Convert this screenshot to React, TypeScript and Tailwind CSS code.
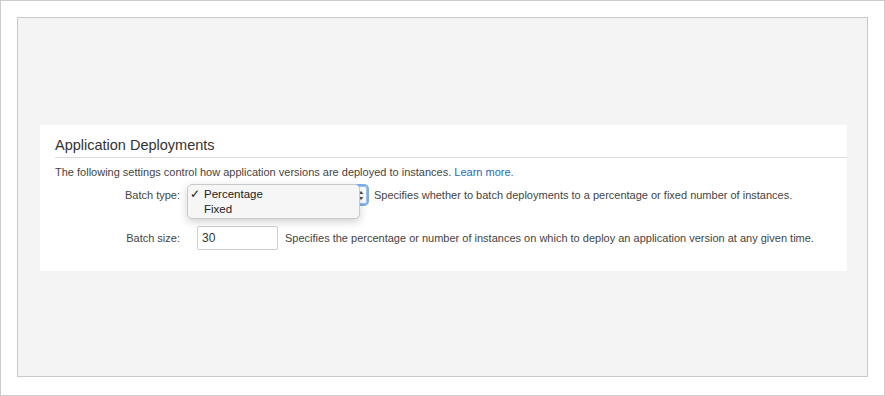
export default function App() {
  return (
    <div className="w-[885px] h-[396px] bg-white border border-[#cccccc] p-4 font-['Liberation_Sans',Arial,sans-serif] text-[#444]">
      <div className="h-[360px] bg-[#f4f4f4] border border-[#c9c9c9] pt-[107px] pl-[22px]">
        <div className="w-[807px] h-[146px] bg-white">
          <div className="ml-[15px] pt-[11px] pb-[3px] border-b border-[#dcdcdc]">
            <h2 className="text-[14.5px] leading-[18px] text-[#333]">Application Deployments</h2>
          </div>

          <p className="ml-[15px] mt-[6px] text-[11px] leading-[16px]">
            The following settings control how application versions are deployed to instances.{' '}
            <a className="text-[#1f6bb4]">Learn more.</a>
          </p>

          <div className="mt-[5px] flex items-center h-[20px] text-[11px]">
            <span className="w-[141px] text-right pr-[1px]">Batch type:</span>
            <div className="ml-[16px] relative w-[170px] h-[18px] rounded-[3px] border border-[#9dc3ee] ring-2 ring-[#7aaef0]">
              <svg className="absolute right-[2px] top-[3px]" width="6" height="11" viewBox="0 0 6 11">
                <path d="M0.5 4 L3 1 L5.5 4 Z M0.5 7 L3 10 L5.5 7 Z" fill="#555" />
              </svg>
              <div className="absolute -left-[11px] -top-[3px] w-[173px] h-[35px] rounded-[5px] bg-[#f6f6f6] border border-[#c9c9c9] shadow-[0_3px_8px_rgba(0,0,0,0.18)] pt-[2px] text-[11.5px] leading-[15px] text-[#222]">
                <div className="flex">
                  <span className="w-[16px] text-right pr-[4px]">✓</span>
                  <span>Percentage</span>
                </div>
                <div className="flex">
                  <span className="w-[16px]" />
                  <span>Fixed</span>
                </div>
              </div>
            </div>
            <span className="ml-[7px]">
              Specifies whether to batch deployments to a percentage or fixed number of instances.
            </span>
          </div>

          <div className="mt-[21px] flex items-center h-[24px] text-[11px]">
            <span className="w-[141px] text-right pr-[1px]">Batch size:</span>
            <div className="ml-[16px] w-[81px] h-[24px] border border-[#cfcfcf] rounded-[2px] px-[4px] flex items-center text-[12px] text-[#333]">
              30
            </div>
            <span className="ml-[7px]">
              Specifies the percentage or number of instances on which to deploy an application version at any given time.
            </span>
          </div>
        </div>
      </div>
    </div>
  );
}
